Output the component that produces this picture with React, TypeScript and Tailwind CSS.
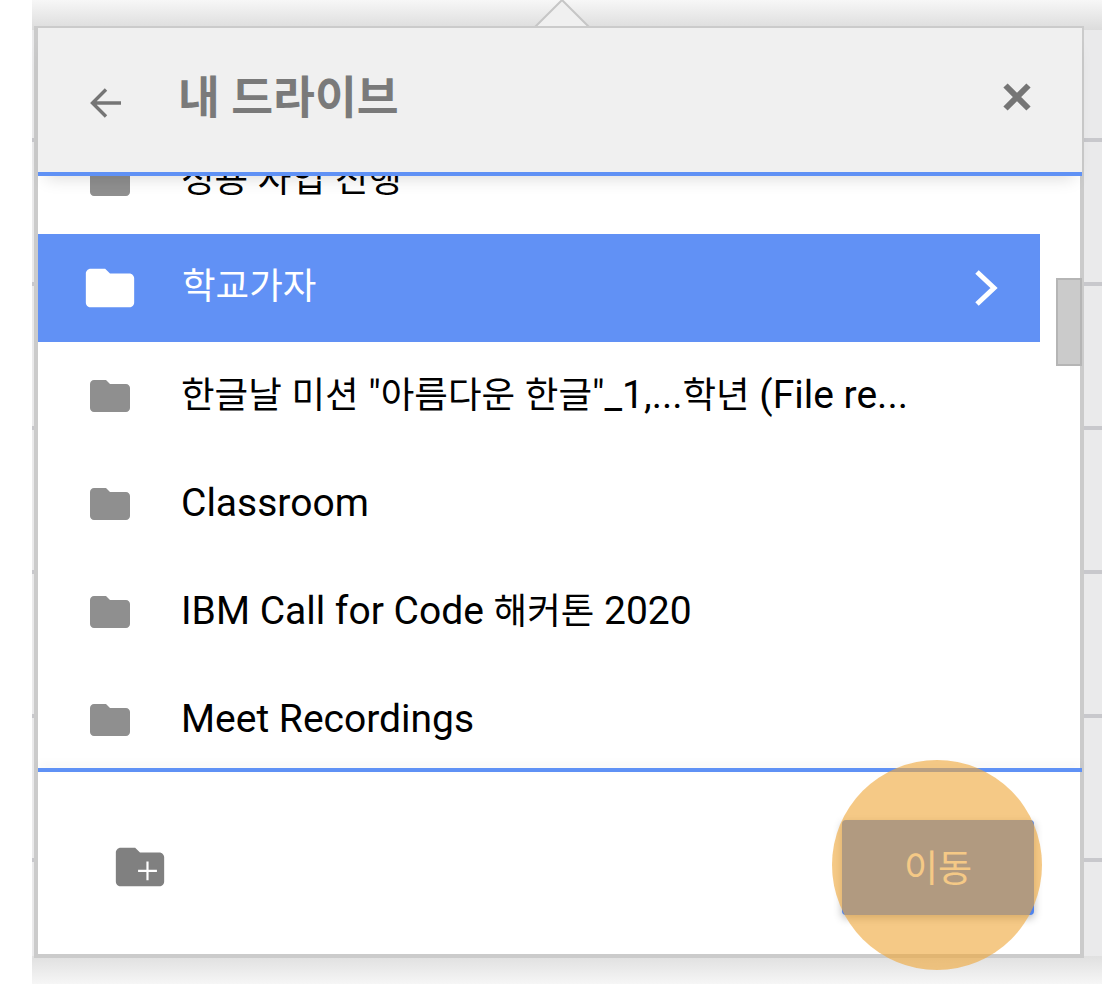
import React from 'react';

const font = 'font-["Roboto","Noto_Sans_CJK_KR",sans-serif]';

const Folder = ({ className }: { className: string }) => (
  <svg viewBox="0 0 24 24" className={className} fill="currentColor">
    <path d="M10 4H4c-1.1 0-2 .9-2 2v12c0 1.1.9 2 2 2h16c1.1 0 2-.9 2-2V8c0-1.1-.9-2-2-2h-8l-2-2z" />
  </svg>
);

// latin in the list is set larger than hangul
const Label = ({ text }: { text: string }) => (
  <span className="whitespace-nowrap text-[39px]">
    {text.split(/([가-힣]+)/).map((part, i) =>
      i % 2 === 1 ? (
        <span key={i} className="text-[36.5px]">
          {part}
        </span>
      ) : (
        part
      )
    )}
  </span>
);

const rows = [
  '한글날 미션 "아름다운 한글"_1,...학년 (File re...',
  'Classroom',
  'IBM Call for Code 해커톤 2020',
  'Meet Recordings',
];

const Row = ({ name }: { name: string }) => (
  <div className="flex h-[108px] items-center pl-[48px] pr-[40px] text-black">
    <Folder className="w-[48px] h-[48px] shrink-0 text-[#8f8f8f]" />
    <span className="ml-[47px] -mt-[1px]">
      <Label text={name} />
    </span>
  </div>
);

export default function App() {
  return (
    <div className={`relative w-[1102px] h-[984px] overflow-hidden bg-white ${font}`}>
      {/* page behind the popup */}
      <div className="ml-[32px] h-full bg-[#eaeaeb] flex flex-col">
        <div className="h-[142px] shrink-0 border-b-[4px] border-[#c8c8cc]" />
        {[0, 1, 2, 3, 4].map((i) => (
          <div key={i} className="h-[144px] shrink-0 border-b-[4px] border-[#c8c8cc]" />
        ))}
      </div>

      {/* soft shade around the popup */}
      <div className="absolute left-[32px] top-0 right-0 h-[30px] bg-gradient-to-b from-[#f7f7f7] to-[#dcdcdc]" />
      <div className="absolute left-[32px] top-[956px] right-0 h-[28px] bg-gradient-to-b from-[#e0e0e0] to-[#f6f6f6]" />

      {/* caret */}
      <svg className="absolute left-[530px] top-0 w-[64px] h-[32px]" viewBox="0 0 64 32">
        <path d="M0 32 L32 0 L64 32 Z" fill="#f0f0f0" stroke="#c6c6c6" strokeWidth="2" />
      </svg>

      {/* popup */}
      <div className="absolute left-[34px] top-[26px] w-[1050px] h-[932px] border-[4px] border-[#cbcbcb] bg-white flex flex-col">
        <div className="relative z-10 -mt-[2px] -mr-[2px] h-[144px] shrink-0 bg-[#f0f0f0] flex items-center shadow-[0_14px_16px_-8px_rgba(0,0,0,0.15)]">
          <svg viewBox="0 0 34 34" className="ml-[51px] w-[34px] h-[34px] mt-[5px] text-[#757575]" fill="none" stroke="currentColor" strokeWidth="3.4">
            <path d="M32 17H3M17 3.5 3.5 17 17 30.5" />
          </svg>
          <span className="ml-[55px] text-[45.5px] font-bold text-[#7a7a7a] -mt-[1px]">내 드라이브</span>
          <svg viewBox="0 0 28 28" className="ml-auto mr-[51px] w-[28px] h-[28px] -mt-[6px] text-[#757575]" fill="none" stroke="currentColor" strokeWidth="6">
            <path d="M2.5 2.5 25.5 25.5M25.5 2.5 2.5 25.5" />
          </svg>
        </div>
        <div className="h-[4px] shrink-0 -mr-[2px] bg-[#5f91f5] relative z-10" />

        <div className="relative h-[592px] shrink-0">
          <div className="h-full overflow-hidden">
            <div className="-mt-[50px] mr-[40px]">
              <Row name="정용 사업 진행" />
              <div className="flex h-[108px] items-center pl-[43px] pr-[40px] bg-[#6191f5] text-white">
                <Folder className="w-[58px] h-[58px] shrink-0 text-white" />
                <span className="ml-[43px] -mt-[3px]">
                  <Label text="학교가자" />
                </span>
                <svg viewBox="0 0 26 36" className="ml-auto w-[26px] h-[36px]" fill="none" stroke="white" strokeWidth="5">
                  <path d="M3 2 20 18 3 34" />
                </svg>
              </div>
              {rows.map((r) => (
                <Row key={r} name={r} />
              ))}
            </div>
          </div>
          {/* scrollbar */}
          <div className="absolute -right-[2px] top-[102px] w-[26px] h-[88px] bg-[#cbcbcb] border-[2px] border-[#b5b5b5]" />
        </div>

        <div className="h-[4px] shrink-0 bg-[#5f91f5] -mr-[2px] shadow-[0_-4px_8px_rgba(0,0,0,0.06)]" />

        <div className="flex-1 flex items-center pl-[73px] pr-[46px] pt-[8px]">
          <svg viewBox="0 0 24 24" className="w-[58px] h-[58px] text-[#808080]" fill="currentColor">
            <path d="M20 6h-8l-2-2H4c-1.1 0-2 .9-2 2v12c0 1.1.9 2 2 2h16c1.1 0 2-.9 2-2V8c0-1.1-.9-2-2-2z" />
            <path d="M11.2 13.6h7.8M15.1 9.7v7.8" stroke="white" strokeWidth="0.9" fill="none" />
          </svg>
          <div className="ml-auto w-[192px] h-[95px] pt-[6px] rounded-[4px] bg-[#4e83ef] text-white text-[37px] flex items-center justify-center shadow-[0_3px_8px_rgba(0,0,0,0.3)]">
            이동
          </div>
        </div>
      </div>

      {/* highlight over the button */}
      <div className="absolute left-[832px] top-[760px] w-[210px] h-[210px] rounded-full bg-[rgba(239,168,60,0.62)]" />
    </div>
  );
}
